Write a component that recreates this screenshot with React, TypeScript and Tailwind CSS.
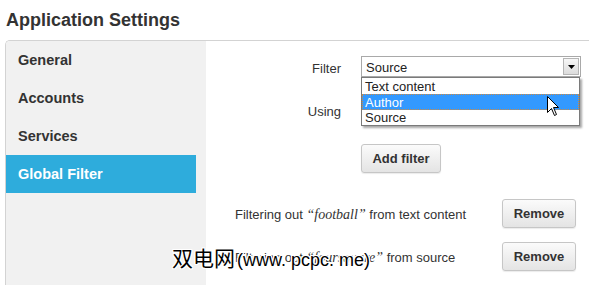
export default function App() {
  const btn =
    "flex items-center justify-center rounded-[3px] border border-[#c6c6c6] bg-gradient-to-b from-[#fbfbfb] to-[#e4e4e4] pt-[1px] text-[13px] font-bold text-[#333] shadow-[0_1px_1px_rgba(0,0,0,0.08)]";
  return (
    <div className="relative w-[589px] h-[285px] overflow-hidden bg-white text-[#333] font-['Liberation_Sans',Arial,sans-serif]">
      <h1 className="pl-[6px] pt-[10px] text-[18px] leading-[21px] font-bold text-[#333]">
        Application Settings
      </h1>
      <div className="ml-[5px] mt-[9px] flex h-[245px] border-t border-l border-[#d3d3d3] rounded-tl-[5px] overflow-hidden">
        <div className="w-[200px] shrink-0 bg-[#f1f1f1] pr-[10px]">
          {["General", "Accounts", "Services"].map((t) => (
            <div key={t} className="flex h-[38px] items-center pl-[12px] pt-[2px] text-[14.5px] font-bold text-[#333]">
              {t}
            </div>
          ))}
          <div className="flex h-[38px] items-center bg-[#2eacdc] pl-[12px] pt-[2px] text-[14.5px] font-bold text-white">
            Global Filter
          </div>
        </div>
        <div className="relative flex-1 pt-[15px]">
          <div className="flex h-[21px] items-center">
            <div className="w-[135px] pt-[4px] text-right text-[13px]">Filter</div>
            <div className="relative ml-[20px] w-[220px] h-[21px]">
              <div className="flex h-full items-center border border-[#a9a9a9] bg-white pl-[4px] pt-[2px] text-[13px] text-[#222]">
                Source
              </div>
              <div className="absolute right-[2px] top-[2px] flex h-[17px] w-[16px] items-center justify-center border border-[#b5b5b5] bg-gradient-to-b from-[#f7f7f7] to-[#dcdcdc]">
                <svg width="7" height="4" viewBox="0 0 7 4">
                  <path d="M0 0 L7 0 L3.5 4 Z" fill="#000" />
                </svg>
              </div>
              <div className="absolute left-0 top-[21px] z-10 w-[219px] border border-[#7a7a7a] bg-white text-[13px] text-[#222] shadow-[2px_2px_2px_rgba(0,0,0,0.35)]">
                <div className="flex h-[16px] items-center pl-[3px] pt-[1px]">Text content</div>
                <div className="flex h-[16px] items-center border border-dotted border-[#d08a40] bg-[#3399ff] pl-[2px] pt-[1px] text-white">
                  Author
                </div>
                <div className="flex h-[15px] items-center pl-[3px] pt-[1px]">Source</div>
              </div>
            </div>
          </div>
          <div className="mt-[23px] flex h-[21px] items-center">
            <div className="w-[135px] pt-[3px] text-right text-[13px]">Using</div>
          </div>
          <div className="mt-[23px] ml-[155px]">
            <button className={btn + " h-[29px] w-[80px]"}>Add filter</button>
          </div>
          <div className="mt-[26px] ml-[29px] flex items-center">
            <div className="w-[267px] pt-[2px] text-[13px]">
              Filtering out{" "}
              <span className="font-['Liberation_Serif',serif] italic text-[14px]">“football”</span> from text
              content
            </div>
            <button className={btn + " h-[29px] w-[74px]"}>Remove</button>
          </div>
          <div className="mt-[14px] ml-[29px] flex items-center">
            <div className="w-[267px] pt-[2px] text-[13px]">
              Filtering out{" "}
              <span className="font-['Liberation_Serif',serif] italic text-[14px]">“foursquare”</span> from source
            </div>
            <button className={btn + " h-[29px] w-[74px]"}>Remove</button>
          </div>
        </div>
      </div>
      <svg className="absolute left-[547px] top-[96px] z-20" width="13" height="21" viewBox="0 0 13 21">
        <path d="M0.5 0.5 L0.5 16.5 L4.5 12.5 L7.5 19.5 L9.5 18.5 L6.5 11.5 L11.5 11.5 Z" fill="#fff" stroke="#000" strokeWidth="1" />
      </svg>
      <div className="absolute left-[172px] top-[244px] z-30 flex items-baseline whitespace-nowrap text-black [text-shadow:-1px_-1px_0_#fff,1px_-1px_0_#fff,-1px_1px_0_#fff,1px_1px_0_#fff,0_1px_0_#fff,0_-1px_0_#fff,1px_0_0_#fff,-1px_0_0_#fff]">
        <span className="text-[21px] leading-[26px] font-['Noto_Sans_CJK_SC',sans-serif]">双电网</span>
        <span className="ml-[2px] text-[18px] leading-[26px] font-['Liberation_Sans',sans-serif]">(www. pcpc. me)</span>
      </div>
    </div>
  );
}
